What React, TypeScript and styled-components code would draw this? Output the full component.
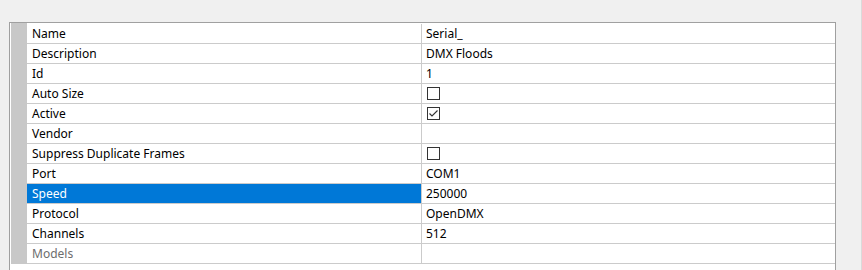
import React from "react";
import styled, { createGlobalStyle } from "styled-components";

const Global = createGlobalStyle`
  html, body { margin: 0; padding: 0; background: #f0f0f0; }
  body { font-family: "Segoe UI", "Noto Sans", sans-serif; font-size: 12px; }
`;

const Page = styled.div`
  width: 862px;
  height: 270px;
  box-sizing: border-box;
  padding: 22px 0 0 9px;
  border-right: 1px solid #dadada;
  overflow: hidden;
`;

const Frame = styled.div`
  width: 827px;
  height: 260px;
  box-sizing: border-box;
  background: #fff;
  border: 1px solid #a0a0a0;
  border-bottom: none;
  padding-left: 1px;
  display: flex;
  align-items: flex-start;
`;

const Gutter = styled.div`
  width: 16px;
  flex: none;
  background: #c8c8c8;
  height: 241px;
`;

const Rows = styled.div`
  flex: 1;
  padding-top: 1px;
  display: flex;
  flex-direction: column;
`;

const Row = styled.div`
  display: flex;
  height: 20px;
  box-sizing: border-box;
  border-bottom: 1px solid #cbcbcb;
`;

const Label = styled.div<{ $selected?: boolean; $disabled?: boolean }>`
  width: 395px;
  flex: none;
  box-sizing: border-box;
  border-right: 1px solid #cbcbcb;
  padding-left: 5px;
  display: flex;
  align-items: center;
  white-space: nowrap;
  background: ${(p) => (p.$selected ? "#0078d7" : "transparent")};
  color: ${(p) => (p.$selected ? "#fff" : p.$disabled ? "#6d6d6d" : "#000")};
`;

const Value = styled.div`
  flex: 1;
  padding-left: 4px;
  display: flex;
  align-items: center;
  color: #000;
  white-space: nowrap;
`;

const Box = styled.span`
  width: 13px;
  height: 13px;
  box-sizing: border-box;
  border: 1px solid #333;
  background: #fff;
  margin-left: 1px;
  display: inline-flex;
  align-items: center;
  justify-content: center;
`;

const Check = ({ checked }: { checked?: boolean }) => (
  <Box>
    {checked && (
      <svg width="11" height="11" viewBox="0 0 11 11">
        <polyline points="1.5,5.5 4,8 9.5,2.5" fill="none" stroke="#333" strokeWidth="1.1" />
      </svg>
    )}
  </Box>
);

type Item = { label: string; value?: React.ReactNode; selected?: boolean; disabled?: boolean };

const items: Item[] = [
  { label: "Name", value: "Serial_" },
  { label: "Description", value: "DMX Floods" },
  { label: "Id", value: "1" },
  { label: "Auto Size", value: <Check /> },
  { label: "Active", value: <Check checked /> },
  { label: "Vendor", value: "" },
  { label: "Suppress Duplicate Frames", value: <Check /> },
  { label: "Port", value: "COM1" },
  { label: "Speed", value: "250000", selected: true },
  { label: "Protocol", value: "OpenDMX" },
  { label: "Channels", value: "512" },
  { label: "Models", value: "", disabled: true },
];

export default function App() {
  return (
    <>
      <Global />
      <Page>
        <Frame>
          <Gutter />
          <Rows>
            {items.map((it) => (
              <Row key={it.label}>
                <Label $selected={it.selected} $disabled={it.disabled}>
                  {it.label}
                </Label>
                <Value>{it.value}</Value>
              </Row>
            ))}
          </Rows>
        </Frame>
      </Page>
    </>
  );
}
